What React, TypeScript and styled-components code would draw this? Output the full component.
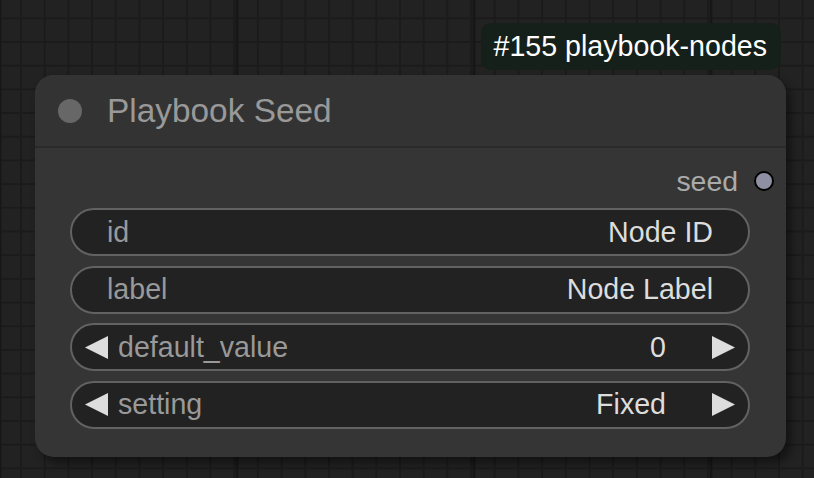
import React from "react";
import styled, { createGlobalStyle } from "styled-components";

const GlobalStyle = createGlobalStyle`
  html, body {
    margin: 0;
    padding: 0;
    width: 100%;
    height: 100%;
    overflow: hidden;
  }
  body {
    font-family: "Liberation Sans", Arial, Helvetica, sans-serif;
  }
`;

const Canvas = styled.div`
  position: relative;
  width: 814px;
  height: 478px;
  overflow: hidden;
  background-color: #222222;
  background-image:
    linear-gradient(to right, #171717 3px, transparent 3px),
    linear-gradient(to right, #1b1b1b 2px, transparent 2px),
    linear-gradient(to bottom, #1b1b1b 2px, transparent 2px);
  background-size: 237px 100%, 23.7px 100%, 100% 23.7px;
  background-position: 235.5px 0, 20px 0, 0 17.3px;
`;

const NodeWrapper = styled.div`
  position: absolute;
  left: 35px;
  top: 23px;
  width: 751px;
  display: flex;
  flex-direction: column;
  align-items: flex-end;
`;

const Badge = styled.div`
  height: 47px;
  box-sizing: border-box;
  padding: 0 14px 0 13px;
  margin-right: 5px;
  margin-bottom: 5px;
  display: flex;
  align-items: center;
  background: #15201a;
  border-radius: 10px;
  color: #ffffff;
  font-size: 28.6px;
  white-space: nowrap;
`;

const Node = styled.div`
  width: 100%;
  box-sizing: border-box;
  border-radius: 19px;
  background: #353535;
  box-shadow: 5px 6px 10px rgba(0, 0, 0, 0.45);
  overflow: hidden;
`;

const TitleBar = styled.div`
  height: 71px;
  display: flex;
  align-items: center;
  background: #333333;
  border-bottom: 2px solid #2a2a2a;
  padding-left: 23px;
`;

const TitleDot = styled.div`
  width: 24px;
  height: 24px;
  border-radius: 50%;
  background: #676767;
  flex-shrink: 0;
`;

const TitleText = styled.div`
  margin-left: 25px;
  color: #999999;
  font-size: 33.4px;
  white-space: nowrap;
`;

const Body = styled.div`
  padding: 14px 36px 28px 35px;
  display: flex;
  flex-direction: column;
`;

const OutputRow = styled.div`
  height: 38px;
  display: flex;
  align-items: center;
  justify-content: flex-end;
  margin-right: -24px;
  gap: 16px;
`;

const OutputLabel = styled.span`
  color: #aaaaaa;
  font-size: 28.4px;
`;

const SlotDot = styled.span`
  width: 16px;
  height: 16px;
  border-radius: 50%;
  background: #8f8fa3;
  border: 2px solid #000000;
`;

const WidgetList = styled.div`
  margin-top: 8px;
  display: flex;
  flex-direction: column;
  gap: 9.6px;
`;

const Widget = styled.div<{ $stepper?: boolean }>`
  height: 48px;
  box-sizing: border-box;
  border: 2px solid #626262;
  border-radius: 24px;
  background: #222222;
  display: flex;
  align-items: center;
  padding: 0 ${(p) => (p.$stepper ? "13px" : "35px")};
  font-size: 28.6px;
  white-space: nowrap;
`;

const Label = styled.span<{ $stepper?: boolean }>`
  flex: 1;
  color: #999999;
  margin-left: ${(p) => (p.$stepper ? "10px" : "0")};
`;

const Value = styled.span<{ $stepper?: boolean }>`
  color: #dddddd;
  margin-right: ${(p) => (p.$stepper ? "46px" : "0")};
`;

const Arrow = styled.svg`
  width: 23px;
  height: 23px;
  flex-shrink: 0;
  display: block;
`;

const LeftArrow = () => (
  <Arrow viewBox="0 0 23 23">
    <polygon points="0,11.5 23,0 23,23" fill="#dddddd" />
  </Arrow>
);

const RightArrow = () => (
  <Arrow viewBox="0 0 23 23">
    <polygon points="23,11.5 0,0 0,23" fill="#dddddd" />
  </Arrow>
);

type W = { label: string; value: string; stepper?: boolean };

const widgets: W[] = [
  { label: "id", value: "Node ID" },
  { label: "label", value: "Node Label" },
  { label: "default_value", value: "0", stepper: true },
  { label: "setting", value: "Fixed", stepper: true },
];

export default function App() {
  return (
    <>
      <GlobalStyle />
      <Canvas>
        <NodeWrapper>
          <Badge>#155 playbook-nodes</Badge>
          <Node>
            <TitleBar>
              <TitleDot />
              <TitleText>Playbook Seed</TitleText>
            </TitleBar>
            <Body>
              <OutputRow>
                <OutputLabel>seed</OutputLabel>
                <SlotDot />
              </OutputRow>
              <WidgetList>
                {widgets.map((w) => (
                  <Widget key={w.label} $stepper={w.stepper}>
                    {w.stepper && <LeftArrow />}
                    <Label $stepper={w.stepper}>{w.label}</Label>
                    <Value $stepper={w.stepper}>{w.value}</Value>
                    {w.stepper && <RightArrow />}
                  </Widget>
                ))}
              </WidgetList>
            </Body>
          </Node>
        </NodeWrapper>
      </Canvas>
    </>
  );
}
